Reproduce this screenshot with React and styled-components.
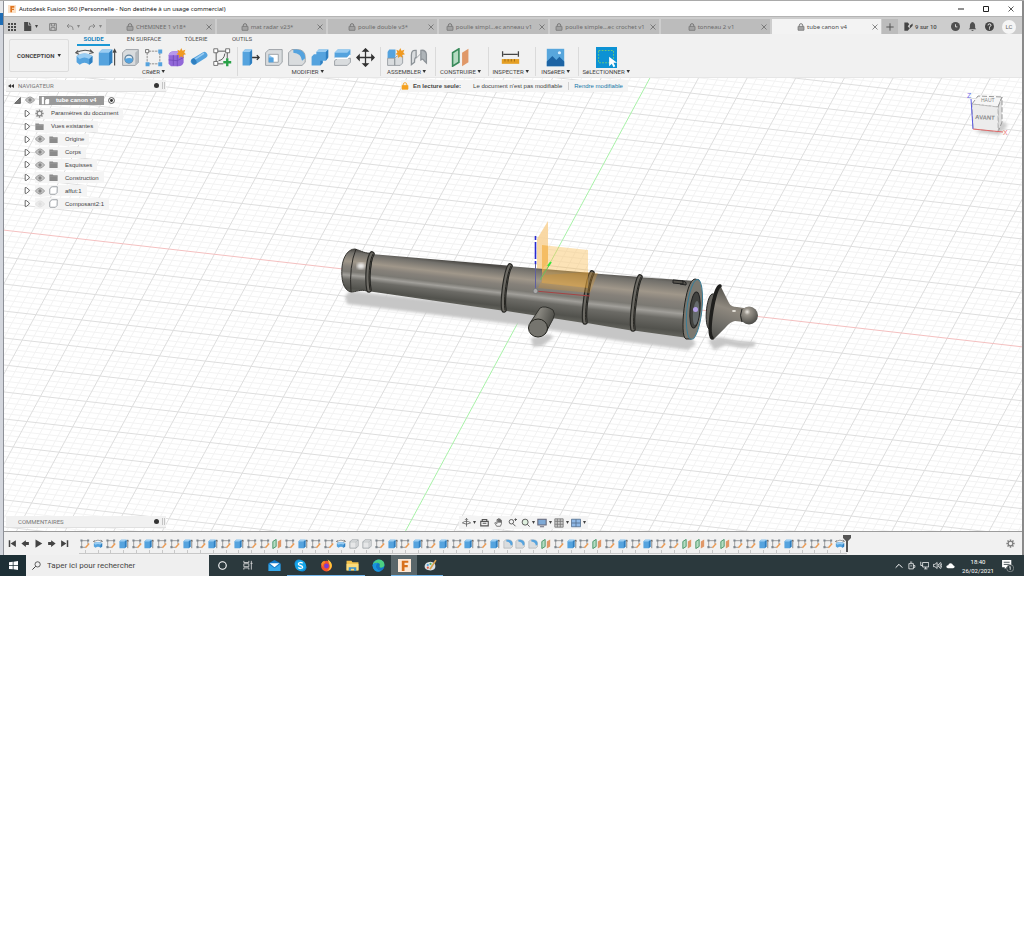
import React from "react";
import styled, { createGlobalStyle, css } from "styled-components";

const roboto = `Roboto, "Liberation Sans", sans-serif`;
const noto = `"Noto Sans", "Liberation Sans", sans-serif`;
const liberation = `"Liberation Sans", Arial, sans-serif`;

const GlobalStyle = createGlobalStyle`
  *, *::before, *::after { box-sizing: border-box; }
  body { margin: 0; background: #fff; color: #444; font: 6px/8px ${roboto}; }
  button { margin: 0; padding: 0; border: 0; background: none; color: inherit; font: inherit; cursor: pointer; }
  ul { margin: 0; padding: 0; list-style: none; }
  svg { display: block; flex: none; }
`;

/* ---------- window frame ---------- */

const Desktop = styled.div`
  display: flex;
  border-top: 1px solid #a9a9a9;
  background: linear-gradient(#e4e6ea 0 12px, #1f6db5 12px 24px, #d3d6dd 24px);
`;
const AppWindow = styled.main`
  flex: 1;
  min-width: 0;
  margin-left: 3px;
  border-left: 1px solid #8d9097;
  border-right: 2px solid #8a8a8a;
  background: #f1f1f1;
`;
const TitleBar = styled.header`
  display: flex;
  align-items: center;
  height: 15px;
  padding-left: 4px;
  gap: 3px;
  background: #fff;
  color: #111;
  font-family: ${noto};
`;
const WindowTitle = styled.h1`
  flex: 1;
  margin: 0;
  font: inherit;
`;
const WindowButton = styled.button`
  display: grid;
  place-items: center;
  width: 22px;
  height: 15px;
`;

/* ---------- document tabs ---------- */

const TabStrip = styled.div`
  display: flex;
  align-items: stretch;
  height: 18px;
  padding-top: 2px;
  border-top: 1px solid #b4b4b4;
  background: #cdcdcd;
`;
const QuickAccess = styled.div`
  display: flex;
  align-items: center;
  width: 102px;
  padding-left: 3px;
  gap: 2px;
  color: #4a4a4a;
`;
const QuickButton = styled.button`
  display: flex;
  align-items: center;
  justify-content: center;
  gap: 3px;
  width: ${(p) => p.$w || 18}px;
  opacity: ${(p) => (p.$dim ? 0.5 : 1)};
`;
const TabList = styled.div`
  display: flex;
  flex: 1;
  gap: 2px;
  min-width: 0;
`;
const DocTab = styled.div`
  display: flex;
  flex: 1;
  align-items: center;
  min-width: 0;
  padding-right: 3px;
  background: ${(p) => (p.$active ? "#f3f3f3" : "#bcbcbc")};
  color: ${(p) => (p.$active ? "#4a4a4a" : "#6b6b6b")};
  font-family: ${noto};
`;
const DocTabLabel = styled.button`
  display: flex;
  flex: 1;
  align-items: center;
  justify-content: center;
  gap: 2px;
  white-space: nowrap;
`;
const AccountBar = styled.div`
  display: flex;
  align-items: center;
  width: 141px;
  gap: 8px;
  padding-right: 6px;
  color: #4a4a4a;
`;
const NewTab = styled.button`
  display: grid;
  place-items: center;
  align-self: stretch;
  width: 16px;
  margin: 0 -2px 0 1px;
  background: #bcbcbc;
`;
const JobStatus = styled.button`
  display: flex;
  flex: 1;
  align-items: center;
  gap: 2px;
  font-weight: 500;
  white-space: nowrap;
`;
const Avatar = styled.button`
  width: 14px;
  height: 14px;
  border-radius: 50%;
  background: #f5f5f5;
  color: #666;
`;

/* ---------- ribbon ---------- */

const Ribbon = styled.section`
  display: flex;
  height: 44px;
  padding-left: 5px;
  border-bottom: 1px solid #e6e6e6;
`;
const Workspace = styled.button`
  align-self: flex-start;
  width: 60px;
  height: 33px;
  margin-top: 5px;
  border: 1px solid #dcdcdc;
  border-radius: 2px;
  font-weight: 700;
`;
const RibbonBody = styled.div`
  margin-left: 4px;
`;
const RibbonTabs = styled.div`
  display: flex;
  height: 12px;
  padding-left: 4px;
`;
const RibbonTab = styled.button`
  height: 12px;
  width: ${(p) => p.$w}px;
  border-bottom: 2px solid ${(p) => (p.$active ? "#1a98d5" : "transparent")};
  color: ${(p) => (p.$active ? "#1583bd" : "#505050")};
  font-weight: ${(p) => (p.$active ? 700 : 400)};
`;
const Groups = styled.div`
  display: flex;
`;
const Group = styled.div`
  display: flex;
  flex-direction: column;
  align-items: center;
  width: ${(p) => p.$w}px;
  padding-right: 3px;
  margin-top: 1px;
  border-right: 1px solid ${(p) => (p.$last ? "transparent" : "#dadada")};
`;
const ToolRow = styled.div`
  display: flex;
  justify-content: center;
  height: 21px;
`;
const Tool = styled.button`
  display: grid;
  place-items: center;
  width: 23px;
  height: 21px;
`;
const GroupLabel = styled.button`
  height: 8px;
  white-space: nowrap;
`;

/* ---------- viewport ---------- */

const Viewport = styled.section`
  position: relative;
  aspect-ratio: 1018 / 453;
  overflow: hidden;
  background: #fff;
`;
const Scene = styled.svg`
  width: 100%;
  height: 100%;
`;
const Browser = styled.aside`
  position: absolute;
  top: 2px;
  left: 2px;
  width: 160px;
`;
const Panel = styled.div`
  display: flex;
  align-items: center;
  height: 12px;
  padding: 0 1px 0 2px;
  gap: 4px;
  background: #f1f1f1;
  border-bottom: 1px solid #e0e0e0;
  color: #777;
  & > span { flex: 1; }
`;
const CommentPanel = styled(Panel)`
  position: absolute;
  bottom: 3px;
  left: 2px;
  width: 160px;
  padding-left: 12px;
`;
const PanelGrip = styled.i`
  width: 3px;
  height: 7px;
  margin-left: -1px;
  border: solid #c4c4c4;
  border-width: 0 1px;
`;
const Tree = styled.ul`
  display: flex;
  flex-direction: column;
  height: 118px;
  padding-top: 2px;
  font-family: ${liberation};
  color: #444;
`;
const TreeRow = styled.li`
  display: flex;
  flex: 1;
  align-items: center;
  padding-left: ${(p) => (p.$root ? 8 : 18)}px;
  gap: 4px;
`;
const TreeChip = styled.span`
  display: flex;
  align-items: center;
  height: 11px;
  gap: 4px;
  padding-right: 5px;
  background: #f4f4f4;
`;
const TreeLabel = styled.button`
  height: 10px;
  padding: 0 ${(p) => (p.$root ? 6 : 0)}px 0 3px;
  white-space: nowrap;
`;
const RootChip = styled.span`
  display: flex;
  align-items: center;
  width: 65px;
  height: 9px;
  padding-left: 2px;
  gap: 3px;
  background: #999;
  color: #fff;
  font-weight: 700;
`;
const Notice = styled.div`
  position: absolute;
  top: 2px;
  left: 39%;
  display: flex;
  align-items: center;
  height: 12px;
  background: #f4f4f4;
  color: #444;
  font-family: ${liberation};
  white-space: nowrap;
  & > strong { margin: 0 12px 0 4px; }
  & > a {
    margin-left: 6px;
    padding: 0 5px;
    border-left: 1px solid #d0d0d0;
    color: #1676a8;
    text-decoration: none;
  }
`;
const NavTools = styled.nav`
  position: absolute;
  bottom: 2px;
  left: 455px;
  display: flex;
  align-items: center;
  height: 13px;
  padding: 0 1px;
  background: #f4f4f4;
  color: #555;
`;
const NavTool = styled.button`
  display: flex;
  align-items: center;
  justify-content: center;
  gap: 2px;
  width: ${(p) => (p.$menu ? 17 : 14)}px;
`;

/* ---------- timeline ---------- */

const Timeline = styled.footer`
  display: flex;
  align-items: center;
  height: 24px;
  padding: 0 7px 0 2px;
  border-top: 1px solid #9c9c9c;
`;
const Playback = styled.div`
  display: flex;
  width: 73px;
`;
const PlayButton = styled.button`
  display: grid;
  place-items: center;
  width: 13px;
`;
const Features = styled.div`
  display: flex;
  width: 768px;
`;
const Feature = styled.button`
  display: flex;
  flex: 1;
  flex-direction: column;
  align-items: center;
  padding-top: 5px;
  &::after {
    content: "";
    width: 100%;
    height: 4px;
    margin-top: 1px;
    border-bottom: 1px solid #c8c8c8;
    background: linear-gradient(#c8c8c8, #c8c8c8) center / 1px 100% no-repeat;
  }
`;
const Playhead = styled.div`
  display: flex;
  margin-left: -4px;
`;
const TimelineSettings = styled.button`
  margin-left: auto;
`;

/* ---------- task bar ---------- */

const TaskBar = styled.nav`
  display: flex;
  align-items: stretch;
  height: 21px;
  background: #2b393d;
  color: #fff;
`;
const StartButton = styled.button`
  display: grid;
  place-items: center;
  width: 26px;
  background: #1d2f35;
`;
const SearchBox = styled.label`
  display: flex;
  align-items: center;
  width: 183px;
  padding-left: 6px;
  gap: 6px;
  background: #efefef;
  color: #333;
`;
const SearchInput = styled.input`
  flex: 1;
  min-width: 0;
  padding: 0;
  border: 0;
  outline: 0;
  background: none;
  font: 8px/12px ${roboto};
  &::placeholder { color: #444; opacity: 1; }
`;
const TaskButton = styled.button`
  display: grid;
  place-items: center;
  width: 26px;
  border-bottom: 1px solid transparent;
  ${(p) => p.$active && css`background: #59666a;`}
  ${(p) => p.$open && css`border-bottom-color: #76b9ed;`}
`;
const Tray = styled.div`
  display: flex;
  align-items: center;
  margin-left: auto;
  padding-right: 10px;
  gap: 4px;
`;
const Clock = styled.time`
  width: 38px;
  text-align: center;
  line-height: 9px;
`;

/* ---------- small glyphs ---------- */

const Svg = ({ s = 10, w, h, box = 24, children, ...rest }) => (
  <svg width={w || s} height={h || s} viewBox={`0 0 ${box} ${box}`} fill="none" aria-hidden="true" {...rest}>
    {children}
  </svg>
);
const Caret = () => (
  <svg width="3" height="3" viewBox="0 0 4 4" aria-hidden="true"><path d="M0 0h4L2 4z" fill="#444" /></svg>
);
const CaretGlyph = styled.svg`
  display: inline-block;
  margin-left: 1px;
`;
const InlineCaret = () => (
  <CaretGlyph width="4" height="4" viewBox="0 0 4 4" aria-hidden="true"><path d="M.500 0h3.500L2.200 3z" fill="#333" /></CaretGlyph>
);
const Lock = ({ fill = "#a2a2a2", color = "#6b6b6b" }) => (
  <Svg s={8}><path d="M7 11V7a5 5 0 0 1 10 0v4" stroke={color} strokeWidth="2.6" /><rect x="3" y="10" width="18" height="12" rx="1" stroke={color} strokeWidth="2" fill={fill} /></Svg>
);
const Close = ({ s = 6, c = "#666" }) => (
  <Svg s={s}><path d="M2 2l20 20M22 2L2 22" stroke={c} strokeWidth="3" /></Svg>
);
const Eye = ({ off }) => (
  <Svg w={10} h={10} opacity={off ? 0.2 : 1}>
    <path d="M1 12q11-15 22 0q-11 15-22 0z" fill="#c4c4c4" stroke="#8f8f8f" strokeWidth="2" />
    <circle cx="12" cy="12" r="4" fill="#858585" />
  </Svg>
);
const Folder = () => (
  <Svg s={9}><path d="M1 4h9l2 2h11v15H1z" fill="#8b8b8b" /><path d="M1 9h22" stroke="#aaa" /></Svg>
);
const Body = () => (
  <Svg s={9}><path d="M2 8l4-5q1-1 3-1h13v13q0 2-1 3l-4 4H4q-2 0-2-2z" fill="#fff" stroke="#7c8288" strokeWidth="2" /><path d="M17 22l5-5V3z" fill="#d4d7da" /></Svg>
);
const Gear = ({ s = 10, c = "#808080" }) => (
  <Svg s={s}>
    <circle cx="12" cy="12" r="6" stroke={c} strokeWidth="3" />
    <path d="M12 1v5M12 18v5M1 12h5M18 12h5M4 4l4 4M16 16l4 4M20 4l-4 4M8 16l-4 4" stroke={c} strokeWidth="4" />
  </Svg>
);
const Dot = () => (
  <Svg s={5}><circle cx="12" cy="12" r="12" fill="#333" /></Svg>
);
const Arrow = () => (
  <Svg s={7}><path d="M4 2h4l10 8v4L8 22H4z" stroke="#555" strokeWidth="3" fill="#fff" /></Svg>
);

/* ---------- ribbon drawings ---------- */

const B = "#55a3de";
const BD = "#2f7fc0";
const BL = "#9bcdf2";
const G = "#d9dcde";
const GD = "#8d9398";
const star = "M18 0l1.600 3.600 3.600-1.400-1.400 3.600 2.200 2.200-3.600.800.400 3.800-2.800-2.200-2.800 2.200.200-3.800-3.400-.800 2.400-2.200-1.400-3.600 3.400 1.400z";

const Drawings = {
  revolve: <><path d="M2 10Q12 4 22 10v8l-4 3q-6-5-12 0l-4-3z" fill={B} /><path d="M2 10Q12 4 22 10l-4 4q-6-4-12 0z" fill={BL} /><path d="M18 14l4-4v8l-4 3z" fill={BD} /><path d="M1 6q11-6 21-1M19 2l4 4-5 1M4 3L1 6l4 2" stroke="#555" strokeWidth="1.300" /></>,
  extrude: <><path d="M1 6l4-4h13v16l-4 4H1z" fill={B} /><path d="M1 6l4-4h13l-4 4z" fill={BL} /><path d="M14 6l4-4v16l-4 4z" fill={BD} /><path d="M21 22V3m-2 3l2-4 2 4" stroke="#444" strokeWidth="1.400" /></>,
  hole: <><path d="M2 6l4-4h16v16l-4 4H2z" fill={G} stroke={GD} /><path d="M18 6l4-4v16l-4 4z" fill="#b4b9bd" /><circle cx="10" cy="14" r="5" fill="#dcebf5" stroke="#5f7f99" strokeWidth="1.600" /><path d="M5 14a5 5 0 0 0 10 0q-4-3-10 0z" fill={B} /></>,
  pattern: <><path d="M6 4h12M4 6v12M6 20h12M20 6v12" stroke="#777" strokeDasharray="3 1" /><path d="M2 2h4v4H2z" fill="#fff" stroke="#555" /><path d="M18 2h5v5h-5zM2 18h5v5H2zM18 18h5v5h-5z" fill={B} /></>,
  form: <><path d="M2 9q1-5 7-5h9l3 4v10q-1 5-7 5H5l-3-3z" fill="#9268d8" /><path d="M2 9q1-5 7-5h9l-5 5z" fill="#b898ec" /><path d="M13 9v14M2 15l11 1 8-4M8 9v13" stroke="#7048b8" /><path d={star} fill="#f09a22" /></>,
  pipe: <><path d="M5 17L18 9" stroke={B} strokeWidth="8" strokeLinecap="round" /><path d="M5 15L17 7" stroke={BL} strokeWidth="2" strokeLinecap="round" /><ellipse cx="5" cy="17" rx="3" ry="4" fill={BD} transform="rotate(-30 5 17)" /></>,
  sketchNew: <><path d="M3 4h16M3 20h10M4 3v18M18 3v10" stroke="#555" strokeWidth="1.200" /><path d="M1 1h5v5H1zM16 1h5v5h-5zM1 17h5v5H1z" fill="#fff" stroke="#555" /><path d="M7 16q7-1 8-9" stroke="#555" strokeWidth="1.200" /><path d="M18 13v10M13 18h10" stroke="#2aa148" strokeWidth="3" /></>,
  pressPull: <><path d="M2 5l3-3h9v17l-3 3H2z" fill={B} /><path d="M11 5l3-3v17l-3 3z" fill={BD} /><path d="M2 5l3-3h9l-3 3z" fill={BL} /><path d="M14 12h9m-3-3l3 3-3 3" stroke="#333" strokeWidth="1.600" /></>,
  shell: <><path d="M2 6l4-4h17v16l-4 4H2z" fill={G} stroke={GD} /><path d="M6 8h12v10H6z" fill="#fff" stroke={GD} /><path d="M6 8l6 5v5H6z" fill={BL} /><path d="M6 12h6v6H6z" fill={B} /></>,
  fillet: <><path d="M2 6l4-4h7q10 0 10 10v6l-4 4H2z" fill={G} stroke={GD} /><path d="M8 2h5q10 1 10 11l-4 3Q18 7 8 6z" fill={B} /></>,
  combine: <><path d="M8 5l3-3h12v10l-3 4h-4v3l-3 3H2V11l3-3h3z" fill={B} /><path d="M8 5l3-3h12l-3 3z" fill={BL} /><path d="M20 5l3-3v10l-3 4zM13 16h3v3l-3 3z" fill={BD} /></>,
  offset: <><path d="M2 6l4-4h16v7l-4 4H2z" fill={B} /><path d="M2 6l4-4h16l-4 4z" fill={BL} /><path d="M2 16l4-3h16v5l-4 4H2z" fill={G} stroke={GD} /><path d="M2 13h16l4-4" stroke="#fff" strokeWidth="2" /></>,
  move: <path d="M12 2v20M2 12h20M9 4l3-3 3 3zM9 20l3 3 3-3zM4 9l-3 3 3 3zM20 9l3 3-3 3z" stroke="#333" fill="#333" strokeWidth="1.600" />,
  component: <><path d="M2 5l2-3h8v8l-1 3H2z" fill={B} /><path d="M2 13h9v9H2zM11 13l3-3h7v9l-3 3h-7z" fill={G} stroke={GD} /><path d={star} fill="#f09a22" /></>,
  joint: <><path d="M3 21V9q0-7 6-6v9q-2 0-2 6z" fill={G} stroke={GD} strokeWidth="1.600" /><path d="M22 19V8q-1-6-7-5v12q3-2 4 1z" fill="#aeb4b8" stroke={GD} strokeWidth="1.600" /><path d="M9 13l6-6" stroke={GD} /></>,
  plane: <><path d="M2 6l8-5v17l-8 5z" fill="#b5dcc2" stroke="#388a5a" strokeWidth="2" /><path d="M14 6l8-5v17l-8 5z" fill="#e09868" /></>,
  measure: <><path d="M2 4v7M22 4v7M3 8h18" stroke="#444" strokeWidth="1.600" /><path d="M1 14h22v6H1z" fill="#e59f24" /><path d="M5 14v3M9 14v3M13 14v3M17 14v3" stroke="#8d6111" /></>,
  picture: <><path d="M1 1h22v22H1z" fill="#58a6dc" /><path d="M1 17l7-7 5 5 4-4 6 6v6H1z" fill="#1d64a4" /><circle cx="17" cy="6" r="2" fill="#d9efff" /></>,
  select: <><path d="M0 0h24v24H0z" fill="#0c92d4" /><path d="M3 4h17v14H3z" stroke="#7bd36b" strokeDasharray="2 1.500" /><path d="M15 11v11l3-3 2 4 2-1-2-4h4z" fill="#fff" /></>,
  sketch: <><path d="M4 4h15v8M4 4v16h9" stroke="#777" strokeWidth="1.600" /><path d="M1 1h5v5H1zM17 1h5v5h-5zM1 17h5v5H1z" fill="#7d868e" /><path d="M13 21l9-10" stroke="#eb9a52" strokeWidth="3.500" /></>,
  box: <><path d="M2 7l5-5h15v15l-5 5H2z" fill="#e6e7e8" stroke={GD} strokeWidth="1.600" /><path d="M2 7h15v15M17 7l5-5" stroke={GD} /></>,
};
const Icon = ({ name, s = 19 }) => <Svg s={s}>{Drawings[name]}</Svg>;

/* ---------- data ---------- */

const documents = [
  "CHEMINEE 1 v18*",
  "mat radar v23*",
  "poulie double v3*",
  "poulie simpl...ec anneau v1",
  "poulie simple...ec crochet v1",
  "tonneau 2 v1",
  "tube canon v4",
];
const ribbonTabs = [["SOLIDE", 33], ["EN SURFACE", 68], ["TÔLERIE", 36], ["OUTILS", 56]];
const toolGroups = [
  { label: "CRéER", w: 165, tools: ["revolve", "extrude", "hole", "pattern", "form", "pipe", "sketchNew"] },
  { label: "MODIFIER", w: 143, tools: ["pressPull", "shell", "fillet", "combine", "offset", "move"] },
  { label: "ASSEMBLER", w: 55, tools: ["component", "joint"] },
  { label: "CONSTRUIRE", w: 53, tools: ["plane"] },
  { label: "INSPECTER", w: 47, tools: ["measure"] },
  { label: "INSéRER", w: 43, tools: ["picture"] },
  { label: "SéLECTIONNER", w: 58, tools: ["select"] },
];
const treeItems = [
  { label: "Paramètres du document", icon: <Gear s={9} c="#8b8b8b" /> },
  { label: "Vues existantes", icon: <Folder /> },
  { label: "Origine", icon: <Folder />, eye: "on" },
  { label: "Corps", icon: <Folder />, eye: "on" },
  { label: "Esquisses", icon: <Folder />, eye: "on" },
  { label: "Construction", icon: <Folder />, eye: "on" },
  { label: "affut:1", icon: <Body />, eye: "on" },
  { label: "Composant2:1", icon: <Body />, eye: "off" },
];
const featureNames = { s: "sketch", r: "revolve", e: "extrude", p: "plane", g: "box", f: "fillet" };
const features = [
  "srsesessesesess",
  "psessrggseseses",
  "eseffFpsespsese".toLowerCase(),
  "ssppspssesesssr",
].join("").split("");
const playback = [
  ["Début", "M2 3h4v18H2zM21 3v18L7 12z"],
  ["Précédent", "M13 3v18L1 12zM13 8h8v8h-8z"],
  ["Lecture", "M4 1v22l18-11z"],
  ["Suivant", "M11 3v18l12-9zM3 8h8v8H3z"],
  ["Fin", "M18 3h4v18h-4zM3 3v18l14-9z"],
];

/* ---------- 3D scene ---------- */

// Ground plane basis: one major cell along each axis, in scene units.
const origin = [535, 291];
const ux = [45.8, 5.25];
const vy = [-13.7, 25.4];
const gridLine = (from, along, n, reach) => {
  const x = origin[0] + from[0] * n;
  const y = origin[1] + from[1] * n;
  return `M${x - along[0] * reach} ${y - along[1] * reach}L${x + along[0] * reach} ${y + along[1] * reach}`;
};
const steps = Array.from({ length: 181 }, (_, i) => i - 90);
const gridPath = (major) =>
  steps
    .filter((i) => i !== 0 && (i % 5 === 0) === major)
    .map((i) => gridLine(ux, vy, i / 5, 20) + gridLine(vy, ux, i / 5, 20))
    .join("");

const Metal = ({ id, x1, y1, x2, y2 }) => (
  <linearGradient id={id} gradientUnits="userSpaceOnUse" x1={x1} y1={y1} x2={x2} y2={y2}>
    <stop offset="0" stopColor="#4d4b47" />
    <stop offset=".08" stopColor="#716f6a" />
    <stop offset=".28" stopColor="#a0978a" />
    <stop offset=".4" stopColor="#86817a" />
    <stop offset=".52" stopColor="#7b7973" />
    <stop offset=".6" stopColor="#a19f9a" />
    <stop offset=".7" stopColor="#6c6b66" />
    <stop offset=".9" stopColor="#52524d" />
    <stop offset="1" stopColor="#63635d" />
  </linearGradient>
);
const Ring = ({ x1, y1, x2, y2 }) => {
  const d = `M${x1} ${y1}C${x1 - 4} ${y1 + 6} ${x2 - 2} ${y2 - 10} ${x2} ${y2}`;
  return (
    <g fill="none" strokeLinecap="round">
      <path d={d} stroke="#282825" strokeWidth="5.500" />
      <path d={d} stroke="#6b6963" strokeWidth="3.200" />
      <path d={d} stroke="#24231f" strokeWidth="1" transform="translate(1 0)" />
    </g>
  );
};

const CannonScene = () => (
  <Scene viewBox="4 78 1018 453" preserveAspectRatio="xMidYMid slice" role="img" aria-label="tube canon">
    <defs>
      <Metal id="chase" x1="443" y1="260" x2="438" y2="303" />
      <Metal id="muzzle" x1="358" y1="250" x2="354" y2="293" />
      <Metal id="middle" x1="550" y1="268" x2="544" y2="318" />
      <Metal id="breechA" x1="615" y1="273" x2="609" y2="328" />
      <Metal id="breechB" x1="666" y1="277" x2="660" y2="335" />
      <linearGradient id="pin" x1="0" y1="0" x2="1" y2=".4">
        <stop offset="0" stopColor="#4f4f4a" /><stop offset=".4" stopColor="#88867f" /><stop offset="1" stopColor="#4b4b46" />
      </linearGradient>
      <linearGradient id="bell" x1=".2" y1="0" x2="0" y2="1">
        <stop offset="0" stopColor="#55534e" /><stop offset=".35" stopColor="#8f897f" /><stop offset=".7" stopColor="#6c6b66" /><stop offset="1" stopColor="#4b4b47" />
      </linearGradient>
      <radialGradient id="ball" cx=".4" cy=".3" r=".7">
        <stop offset="0" stopColor="#eeeae4" /><stop offset=".25" stopColor="#98938a" /><stop offset="1" stopColor="#4c4c48" />
      </radialGradient>
      <filter id="soft"><feGaussianBlur stdDeviation="1.500" /></filter>
    </defs>

    <path d={gridPath(false)} stroke="#f3f3f3" fill="none" />
    <path d={gridPath(true)} stroke="#dedede" fill="none" />
    <path d={gridLine(vy, ux, 0, 20)} stroke="#f4c0c0" />
    <path d={gridLine(ux, vy, 0, 20)} stroke="#a8f2a8" />

    <g fill="#c6c6c6" filter="url(#soft)">
      <path d="M345 296L350 291 505 308 690 336 696 344 688 350 620 341 520 325 347 304z" />
      <path d="M531 338l17-4 6 3-12 9-9 1z" />
      <path d="M708 340l12-3 18 4 18 1-2 5-12 1-16-3-12 5z" />
    </g>

    <path d="M548 221v41l-11 14v-37z" fill="#f8d49a" opacity=".9" />

    <path d="M371 254L513 266 505 311 367 291z" fill="url(#chase)" />
    <path d="M508 266L592 273 584 323 500 310z" fill="url(#middle)" />
    <path d="M588 273L641 277 634 331 581 322z" fill="url(#breechA)" />
    <path d="M637 277L696 281 688 338 630 330z" fill="url(#breechB)" />

    <path d="M355 249C362 251 365 254 373 253L367 291C360 289 356 292 351 292C343 290 341 279 342 267C343 257 348 249 355 249z" fill="url(#muzzle)" stroke="#383733" />
    <path d="M356 249q-7 17-5 43" fill="none" stroke="#2c2b28" />
    <ellipse cx="361" cy="266" rx="4" ry="3" fill="#fff" opacity=".85" filter="url(#soft)" />
    <Ring x1={372} y1={254} x2={369} y2={290} />
    <Ring x1={510} y1={266} x2={504} y2={310} />
    <Ring x1={592} y1={273} x2={585} y2={322} />
    <Ring x1={640} y1={277} x2={633} y2={329} />

    <path d="M535.500 291v-28" stroke="#5f5f9e" />
    <path d="M535.500 236v28" stroke="#2a2ad0" strokeWidth="1.600" strokeDasharray="4 2 17 2 6" />
    <path d="M542 245l46 5v38l-46-5z" fill="#f7b84a" opacity=".4" />
    <path d="M542 245l6 1v21l-6 6z" fill="#f2b046" opacity=".5" />
    <path d="M588 272l10 1-8 20-52-5 6-13z" fill="#d99427" opacity=".3" />
    <path d="M540 280l10-16" stroke="#6fbf5a" />
    <path d="M548 266l3-4" stroke="#37e43c" strokeWidth="2" />
    <path d="M535 291l55 5" stroke="#a54444" />
    <circle cx="535.500" cy="291" r="2.500" fill="#aaa" stroke="#777" />

    <path d="M530 323L540 308Q545 305 553 310Q556 314 553 319L545 334z" fill="url(#pin)" stroke="#32322e" />
    <ellipse cx="538" cy="328" rx="9.500" ry="9" fill="#75746e" stroke="#24241f" />

    <path d="M673 280l10 1v3l-10-1zM682 281q5 0 4 4l-6-1" fill="#55534d" stroke="#222" />
    <path d="M695 279C685 279 679 337 686 339l5 0L699 280z" fill="#7a776f" stroke="#22221f" />
    <ellipse cx="694.500" cy="309.500" rx="7.500" ry="30" transform="rotate(6 695 309)" fill="#7b7971" stroke="#3c7d96" />
    <ellipse cx="695" cy="310" rx="5" ry="18" transform="rotate(5 695 310)" fill="#41423f" stroke="#222" />
    <ellipse cx="696" cy="313" rx="3" ry="12" transform="rotate(5 696 313)" fill="#656a6c" />
    <circle cx="695.500" cy="309.500" r="2.500" fill="#b4a0e8" />

    <path d="M712 294C706 297 704 325 709 329l6 1V294z" fill="#66645f" stroke="#292927" />
    <path d="M720 285L729 303Q731 307 737 307L744 308V322L735 321Q730 322 726 327L713 340 710 325 713 295z" fill="url(#bell)" />
    <path d="M720 286C714 288 707 332 712 338" fill="none" stroke="#1f1f1d" strokeWidth="3.500" strokeLinecap="round" />
    <circle cx="749" cy="315.500" r="9" fill="url(#ball)" />
    <path d="M742 309q-3 6 0 13" fill="none" stroke="#262624" />
    <ellipse cx="734" cy="311" rx="2" ry="1" fill="#e8e4dc" />

    <path d="M975 132l24 3 9-10-6-4z" fill="#ccc" filter="url(#soft)" />
    <g stroke="#999" strokeDasharray="5 2">
      <path d="M972 104l6-8 24 1-4 10z" fill="#f6f6f6" />
      <path d="M998 107l4-10v25l-4 10z" fill="#dedede" />
      <path d="M972 104l26 3v25l-25-3z" fill="#ececec" stroke="#bbb" />
    </g>
    <path d="M971 99l2 30" stroke="#5a5ae0" />
    <path d="M973 129l30 3" stroke="#e06868" />
    <g fontFamily={liberation} fontSize="7">
      <text x="967" y="98" fill="#6c6ce6">Z</text>
      <text x="1003" y="135" fill="#ee7a7a">X</text>
      <text x="975" y="119" fontSize="6" fontWeight="700" fill="#8a8a8a" transform="rotate(3 975 119)">AVANT</text>
      <text x="981" y="102" fontSize="5" fill="#888">HAUT</text>
    </g>
  </Scene>
);

/* ---------- page ---------- */

const Stroke = ({ d, s = 9, sw = 2, fill = "none" }) => (
  <Svg s={s}><path d={d} stroke="currentColor" strokeWidth={sw} fill={fill} /></Svg>
);

export default function App() {
  return (
    <>
      <GlobalStyle />
      <Desktop>
        <AppWindow>
          <TitleBar>
            <Svg s={8}><path d="M0 0h24v24H0z" fill="#fbe0c6" /><path d="M7 3h12v5h-7v3h6v4h-6v7H7z" fill="#e0741f" /></Svg>
            <WindowTitle>Autodesk Fusion 360 (Personnelle - Non destinée à un usage commercial)</WindowTitle>
            <WindowButton aria-label="Réduire"><Svg s={6}><path d="M0 12h24" stroke="#222" strokeWidth="4" /></Svg></WindowButton>
            <WindowButton aria-label="Agrandir"><Svg s={6}><path d="M2 2h20v20H2z" stroke="#222" strokeWidth="4" /></Svg></WindowButton>
            <WindowButton aria-label="Fermer"><Close c="#222" /></WindowButton>
          </TitleBar>

          <TabStrip>
            <QuickAccess>
              <QuickButton $w={9} aria-label="Données"><Svg s={8}><path d="M0 0h6v6H0zM9 0h6v6H9zM18 0h6v6h-6zM0 9h6v6H0zM9 9h6v6H9zM18 9h6v6h-6zM0 18h6v6H0zM9 18h6v6H9zM18 18h6v6h-6z" fill="#4a4a4a" /></Svg></QuickButton>
              <QuickButton $w={25} aria-label="Fichier"><Svg s={9}><path d="M3 0h11v9h8v15H3zM16 0l6 7h-6z" fill="#4a4a4a" /></Svg><Caret /></QuickButton>
              <QuickButton $w={16} $dim aria-label="Enregistrer"><Svg s={8}><path d="M2 2h20v20H2zM7 2v7h10V2M6 22v-8h12v8" stroke="#333" strokeWidth="3" /></Svg></QuickButton>
              <QuickButton $w={20} $dim aria-label="Annuler"><Stroke s={8} sw={3} d="M9 3L3 9l6 6M3 9h11q7 0 7 9v3" /><Caret /></QuickButton>
              <QuickButton $w={19} $dim aria-label="Rétablir"><Stroke s={8} sw={3} d="M15 3l6 6-6 6M21 9H10q-7 0-7 9v3" /><Caret /></QuickButton>
            </QuickAccess>
            <TabList>
              {documents.map((name, i) => (
                <DocTab key={name} $active={i === documents.length - 1}>
                  <DocTabLabel><Lock />{name}</DocTabLabel>
                  <button aria-label="Fermer l'onglet"><Close /></button>
                </DocTab>
              ))}
            </TabList>
            <AccountBar>
              <NewTab aria-label="Nouvel onglet"><Svg s={8}><path d="M12 1v22M1 12h22" stroke="#555" strokeWidth="3" /></Svg></NewTab>
              <JobStatus><Svg s={9}><path d="M1 1h9l4 5-4 5 5 6-5 6H1zM16 9l7-5v6l-8 8z" fill="#444" /></Svg>9 sur 10</JobStatus>
              <button aria-label="Tâches"><Svg s={9}><circle cx="12" cy="12" r="12" fill="#505050" /><path d="M12 6v7h5" stroke="#ddd" strokeWidth="2.500" /></Svg></button>
              <button aria-label="Notifications"><Svg s={9}><path d="M12 0q7 2 7 11v5l3 3H2l3-3v-5Q5 2 12 0zM8 21h8l-4 3z" fill="#505050" /></Svg></button>
              <button aria-label="Aide"><Svg s={9}><circle cx="12" cy="12" r="12" fill="#444" /><path d="M8 9q0-4 4-4t4 4q0 2-4 4v2M12 17v3" stroke="#fff" strokeWidth="2.500" /></Svg></button>
              <Avatar>LC</Avatar>
            </AccountBar>
          </TabStrip>

          <Ribbon>
            <Workspace>CONCEPTION <InlineCaret /></Workspace>
            <RibbonBody>
              <RibbonTabs>
                {ribbonTabs.map(([name, w], i) => (
                  <RibbonTab key={name} $w={w} $active={i === 0}>{name}</RibbonTab>
                ))}
              </RibbonTabs>
              <Groups>
                {toolGroups.map((g, i) => (
                  <Group key={g.label} $w={g.w} $last={i === toolGroups.length - 1}>
                    <ToolRow>
                      {g.tools.map((t) => (
                        <Tool key={t} aria-label={t}><Icon name={t} s={t === "select" ? 21 : 19} /></Tool>
                      ))}
                    </ToolRow>
                    <GroupLabel>{g.label}<InlineCaret /></GroupLabel>
                  </Group>
                ))}
              </Groups>
            </RibbonBody>
          </Ribbon>

          <Viewport>
            <CannonScene />
            <Browser>
              <Panel>
                <Svg s={6}><path d="M12 4v16L0 12zM24 4v16L12 12z" fill="#333" /></Svg>
                <span>NAVIGATEUR</span>
                <Dot /><PanelGrip />
              </Panel>
              <Tree>
                <TreeRow $root>
                  <Svg s={7}><path d="M22 2v20H2z" fill="#777" stroke="#333" strokeWidth="2" /></Svg>
                  <Eye />
                  <RootChip>
                    <Svg s={9}><path d="M1 1h8v22H1zM10 11l4-4h9v12l-4 4h-9z" fill="#fff" stroke="#777" strokeWidth="1.500" /></Svg>
                    <TreeLabel $root>tube canon v4</TreeLabel>
                  </RootChip>
                  <Svg s={7}><circle cx="12" cy="12" r="10" stroke="#444" strokeWidth="3" fill="#fff" /><circle cx="12" cy="12" r="5" fill="#333" /></Svg>
                </TreeRow>
                {treeItems.map((item) => (
                  <TreeRow key={item.label}>
                    <Arrow />
                    <TreeChip>
                      {item.eye && <Eye off={item.eye === "off"} />}
                      {item.icon}
                      <TreeLabel>{item.label}</TreeLabel>
                    </TreeChip>
                  </TreeRow>
                ))}
              </Tree>
            </Browser>
            <Notice>
              <Lock fill="#f5a01e" color="#f5a01e" />
              <strong>En lecture seule:</strong>
              <span>Le document n'est pas modifiable</span>
              <a href="#modifiable">Rendre modifiable</a>
            </Notice>
            <CommentPanel><span>COMMENTAIRES</span><Dot /><PanelGrip /></CommentPanel>
            <NavTools>
              <NavTool $menu aria-label="Orbite"><Stroke d="M12 1v22M1 13q11-9 22 0-11 7-22 0M8 5l4-4 4 4" /><Caret /></NavTool>
              <NavTool aria-label="Regarder"><Stroke d="M2 9h20v12H2zM6 9V4h12v5M7 14h10" sw={3} /></NavTool>
              <NavTool aria-label="Panoramique"><Stroke d="M7 22l-5-9 2-1 4 3V4h3v8-10h3v10-9h3v9-6h3v9l-3 7z" /></NavTool>
              <NavTool aria-label="Zoom"><Stroke d="M3 10a6 6 0 1 0 12 0 6 6 0 1 0-12 0M13 15l7 7M17 4h7M20 1v7" sw={2.5} /></NavTool>
              <NavTool $menu aria-label="Ajuster"><Stroke d="M3 11a8 8 0 1 0 16 0 8 8 0 1 0-16 0M17 17l6 6" sw={2.5} fill="#dff0df" /><Caret /></NavTool>
              <NavTool $menu aria-label="Affichage"><Svg s={10}><path d="M2 3h20v14H2zM7 21h10" fill="#7ea9d6" stroke="#667" strokeWidth="2.500" /></Svg><Caret /></NavTool>
              <NavTool $menu aria-label="Grille"><Svg s={10}><path d="M2 2h20v20H2zM2 8h20M2 15h20M8 2v20M15 2v20" fill="#ccc" stroke="#777" strokeWidth="2" /></Svg><Caret /></NavTool>
              <NavTool $menu aria-label="Vues"><Svg s={10}><path d="M1 3h22v18H1zM12 3v18M1 12h22" fill="#8fb8e6" stroke="#56708f" strokeWidth="2" /></Svg><Caret /></NavTool>
            </NavTools>
          </Viewport>

          <Timeline>
            <Playback>
              {playback.map(([label, d]) => (
                <PlayButton key={label} aria-label={label}><Svg s={9}><path d={d} fill="#444" /></Svg></PlayButton>
              ))}
            </Playback>
            <Features>
              {features.map((f, i) => (
                <Feature key={i} aria-label={featureNames[f]}><Icon name={featureNames[f]} s={10} /></Feature>
              ))}
            </Features>
            <Playhead>
              <svg width="8" height="17" viewBox="0 0 8 17" aria-hidden="true"><path d="M0 0h8v3L5 6v11H3V6L0 3z" fill="#555" /></svg>
            </Playhead>
            <TimelineSettings aria-label="Paramètres"><Gear s={9} /></TimelineSettings>
          </Timeline>
        </AppWindow>
      </Desktop>

      <TaskBar>
        <StartButton aria-label="Démarrer"><Svg s={9}><path d="M0 3l10-1v9H0zM12 2l12-2v11H12zM0 13h10v9L0 21zM12 13h12v11l-12-2z" fill="#fff" /></Svg></StartButton>
        <SearchBox>
          <Svg s={9}><circle cx="15" cy="9" r="7" stroke="#333" strokeWidth="2" /><path d="M10 14L1 23" stroke="#333" strokeWidth="2.500" /></Svg>
          <SearchInput type="search" placeholder="Taper ici pour rechercher" aria-label="Taper ici pour rechercher" />
        </SearchBox>
        <TaskButton aria-label="Cortana"><Svg s={9}><circle cx="12" cy="12" r="10" stroke="#fff" strokeWidth="3" /></Svg></TaskButton>
        <TaskButton aria-label="Vue des tâches"><Svg s={10}><path d="M2 2v4h12V2M2 9h12v7H2zM2 23v-4h12v4M20 2v21M18 8h5" stroke="#ddd" strokeWidth="2" /></Svg></TaskButton>
        <TaskButton aria-label="Courrier"><Svg s={13}><path d="M1 8l11-6 11 6v14H1z" fill="#1479c8" /><path d="M3 8h18l-9 7z" fill="#fff" /><path d="M1 9l11 8 11-8v13H1z" fill="#35a8ea" /></Svg></TaskButton>
        <TaskButton $open aria-label="Skype"><Svg s={13}><circle cx="9" cy="9" r="8" fill="#1492dd" /><circle cx="15" cy="15" r="8" fill="#0d86d3" /><circle cx="12" cy="12" r="10" fill="#16a5e8" /><path d="M16 8q-2-2-5-1.500-3 .500-3 2.500t4 3q4 1 4 3t-4 2.500q-3 0-4-2" stroke="#fff" strokeWidth="2.400" /></Svg></TaskButton>
        <TaskButton $open aria-label="Firefox"><Svg s={13}><circle cx="12" cy="13" r="10" fill="#f5532d" /><path d="M14 1q8 4 8 12-2 8-9 9 6-4 5-10-2-6-4-11z" fill="#ffc63a" /><path d="M2 9q2-5 6-6l2 4q-5 1-4 8z" fill="#f98b25" /><circle cx="12" cy="13" r="4.500" fill="#7b3ed0" /></Svg></TaskButton>
        <TaskButton $open aria-label="Explorateur"><Svg s={13}><path d="M1 3h9l2 3h11v15H1z" fill="#f2c14a" /><path d="M1 9h22v12H1z" fill="#fbdc7c" /><path d="M5 22v-7h14v7h-4v-4H9v4z" fill="#3f94cd" /></Svg></TaskButton>
        <TaskButton aria-label="Edge"><Svg s={13}><circle cx="12" cy="12" r="11" fill="#1377c8" /><path d="M2 8Q6 1 13 1q10 1 10 10-1 5-7 5-3-1-2-3 2-5-4-6-5 0-8 4z" fill="#4bcf83" /><path d="M1 11q4-6 10-3-5 3-3 8 3 6 10 5-7 5-13 0-4-4-4-10z" fill="#1994dc" /></Svg></TaskButton>
        <TaskButton $open $active aria-label="Fusion 360"><Svg s={13}><path d="M0 0h24v24H0z" fill="#fbe6d4" /><path d="M7 3h12v4h-7v4h6v4h-6v7H7z" fill="#d8701c" /></Svg></TaskButton>
        <TaskButton $open aria-label="Paint"><Svg s={13}><path d="M12 5q9 1 9 8 0 8-9 8-11 0-11-8 1-7 11-8z" fill="#d9e1e6" /><circle cx="7" cy="11" r="2" fill="#4a9fdd" /><circle cx="12" cy="9" r="2" fill="#58b658" /><circle cx="7" cy="16" r="2" fill="#e35a42" /><path d="M11 19L22 2" stroke="#d9a24d" strokeWidth="3" /></Svg></TaskButton>
        <Tray>
          <Stroke s={8} sw={3} d="M2 17L12 7l10 10" />
          <Stroke d="M5 7h12v14H5zM8 3h6M17 12h4v5h-4M9 13h4" />
          <Stroke d="M7 4h16v12H7zM2 2v10h5M11 21h9M15 16v5" />
          <Stroke d="M1 9h4l6-5v16l-6-5H1zM14 8q3 4 0 8M17 5q6 7 0 14M20 3q7 9 0 18" />
          <Svg s={9}><path d="M5 19Q0 18 1 14q1-3 5-3 1-5 6-5 5 0 7 5 5 1 4 5-1 3-4 3z" fill="#fff" /></Svg>
          <Clock>18:40<br />26/02/2021</Clock>
          <Svg s={13}><path d="M2 2h17v13h-9l-3 4v-4H2z" fill="#fff" /><path d="M5 6h11M5 10h11" stroke="#2b393d" strokeWidth="1.500" /><circle cx="17" cy="17" r="6.500" fill="#2b393d" stroke="#bbb" /><path d="M15 15l2-1v6" stroke="#fff" strokeWidth="1.500" /></Svg>
        </Tray>
      </TaskBar>
    </>
  );
}
